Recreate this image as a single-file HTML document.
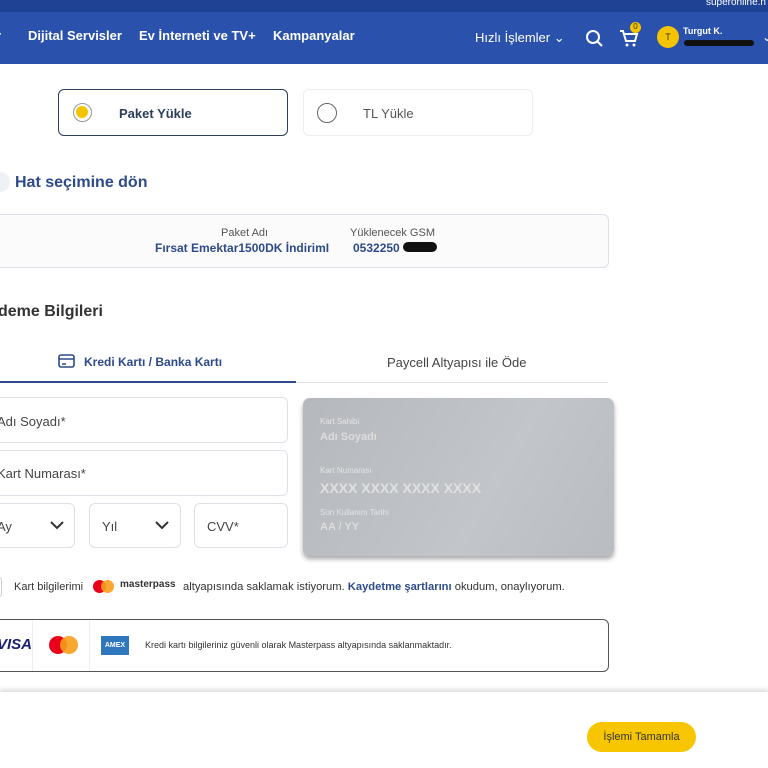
<!DOCTYPE html><html><head><meta charset="utf-8"><style>
*{margin:0;padding:0;box-sizing:border-box}
body{width:768px;height:768px;overflow:hidden;background:#fff;font-family:"Liberation Sans",sans-serif;position:relative;color:#333}
.a{position:absolute}
.box{position:absolute;border:1px solid #dde0e6;border-radius:6px;background:#fff}
.lbl{font-size:13px;color:#444}
</style></head><body>
<div class="a" style="left:0;top:0;width:768px;height:12px;background:#1f4294"></div>
<div class="a" style="right:2px;top:-3px;font-size:10px;color:#fff">superonline.n</div>
<div class="a" style="left:0;top:12px;width:768px;height:52px;background:#2a52ad"></div>
<div class="a" style="top:28px;left:0;color:#fff;font-size:13px;font-weight:bold;white-space:nowrap">
<span class="a" style="left:-4px">r</span><span class="a" style="left:28px">Dijital Servisler</span><span class="a" style="left:139px">Ev İnterneti ve TV+</span><span class="a" style="left:273px">Kampanyalar</span></div>
<div class="a" style="top:30px;left:475px;color:#fff;font-size:13px">Hızlı İşlemler ⌄</div>
<svg class="a" style="left:585px;top:29px" width="18" height="18"><circle cx="8" cy="8" r="6" fill="none" stroke="#fff" stroke-width="2"/><path d="M12 12l5 5" stroke="#fff" stroke-width="2"/></svg>
<svg class="a" style="left:619px;top:28px" width="20" height="20"><path d="M1 3h3l3 10h9l2-7H5" fill="none" stroke="#fff" stroke-width="2"/><circle cx="8" cy="17" r="1.5" fill="#fff"/><circle cx="15" cy="17" r="1.5" fill="#fff"/></svg>
<div class="a" style="left:630px;top:22px;width:11px;height:11px;border-radius:50%;background:#f5c400;font-size:8px;text-align:center;color:#333">0</div>
<div class="a" style="left:657px;top:26px;width:22px;height:22px;border-radius:50%;background:#f5c400;font-size:9px;text-align:center;line-height:22px;color:#333">T</div>
<div class="a" style="left:683px;top:26px;color:#fff;font-size:9px;font-weight:bold">Turgut K.</div>
<div class="a" style="left:684px;top:40px;width:70px;height:6px;background:#111;border-radius:3px"></div>
<div class="a" style="left:762px;top:30px;color:#fff;font-size:12px">⌄</div>

<div class="box" style="left:58px;top:89px;width:230px;height:47px;border-color:#2d3e5e"></div>
<div class="a" style="left:73px;top:103px;width:19px;height:19px;border-radius:50%;border:1.5px solid #999;background:#fff"><div style="margin:2px;width:12px;height:12px;border-radius:50%;background:#f5c400"></div></div>
<div class="a" style="left:119px;top:106px;font-size:13px;font-weight:bold;color:#2d3e5e">Paket Yükle</div>
<div class="box" style="left:303px;top:89px;width:230px;height:47px;border-color:#eee"></div>
<div class="a" style="left:317px;top:103px;width:20px;height:20px;border-radius:50%;border:1.5px solid #666"></div>
<div class="a" style="left:363px;top:106px;font-size:13px;color:#555">TL Yükle</div>

<div class="a" style="left:-10px;top:172px;width:20px;height:20px;border-radius:50%;background:#eef1f6"></div>
<div class="a" style="left:15px;top:174px;font-size:16px;font-weight:bold;color:#2d4a8a">Hat seçimine dön</div>

<div class="box" style="left:-10px;top:214px;width:619px;height:54px;background:#fbfbfc"></div>
<div class="a" style="left:221px;top:227px;font-size:11px;color:#555">Paket Adı</div>
<div class="a" style="left:155px;top:241px;font-size:12px;font-weight:bold;color:#2d4a8a">Fırsat Emektar1500DK İndirimI</div>
<div class="a" style="left:350px;top:227px;font-size:11px;color:#555">Yüklenecek GSM</div>
<div class="a" style="left:353px;top:241px;font-size:12px;font-weight:bold;color:#2d4a8a">0532250</div>
<div class="a" style="left:403px;top:242px;width:34px;height:10px;background:#111;border-radius:5px"></div>

<div class="a" style="left:-2px;top:303px;font-size:16px;font-weight:bold;color:#333">deme Bilgileri</div>
<svg class="a" style="left:58px;top:354px" width="17" height="14"><rect x="1" y="1" width="15" height="12" rx="2" fill="none" stroke="#2d4a8a" stroke-width="1.6"/><path d="M1 5h15M4 10h4" stroke="#2d4a8a" stroke-width="1.6"/></svg>
<div class="a" style="left:84px;top:355px;font-size:12px;font-weight:bold;color:#2d4a8a">Kredi Kartı / Banka Kartı</div>
<div class="a" style="left:387px;top:355px;font-size:13px;color:#444">Paycell Altyapısı ile Öde</div>
<div class="a" style="left:0;top:382px;width:608px;height:1px;background:#e3e3e3"></div>
<div class="a" style="left:0;top:381px;width:296px;height:2px;background:#2d4a8a"></div>

<div class="box" style="left:-10px;top:397px;width:298px;height:46px"></div>
<div class="a lbl" style="left:-3px;top:414px">Adı Soyadı*</div>
<div class="box" style="left:-10px;top:450px;width:298px;height:46px"></div>
<div class="a lbl" style="left:-3px;top:466px">Kart Numarası*</div>
<div class="box" style="left:-10px;top:503px;width:85px;height:45px"></div>
<div class="a lbl" style="left:-3px;top:519px">Ay</div>
<div class="box" style="left:89px;top:503px;width:92px;height:45px"></div>
<div class="a lbl" style="left:102px;top:519px">Yıl</div>
<svg class="a" style="left:50px;top:521px" width="14" height="9"><path d="M1 1l6 6 6-6" fill="none" stroke="#333" stroke-width="2"/></svg>
<svg class="a" style="left:155px;top:521px" width="14" height="9"><path d="M1 1l6 6 6-6" fill="none" stroke="#333" stroke-width="2"/></svg>
<div class="box" style="left:194px;top:503px;width:94px;height:45px"></div>
<div class="a lbl" style="left:207px;top:519px">CVV*</div>

<div class="a" style="left:303px;top:398px;width:311px;height:158px;border-radius:7px;background:linear-gradient(120deg,#b5b8bd,#c2c5c9 60%,#b9bcc1);box-shadow:0 3px 5px rgba(0,0,0,.35)"></div>
<div class="a" style="left:320px;top:417px;font-size:8px;color:#e4e4e4">Kart Sahibi</div>
<div class="a" style="left:320px;top:431px;font-size:11px;font-weight:bold;color:#dcdcdc">Adı Soyadı</div>
<div class="a" style="left:320px;top:466px;font-size:8px;color:#e4e4e4">Kart Numarası</div>
<div class="a" style="left:320px;top:480px;font-size:14px;font-weight:bold;color:#e0e0e0">XXXX XXXX XXXX XXXX</div>
<div class="a" style="left:320px;top:508px;font-size:8px;color:#e4e4e4">Son Kullanım Tarihi</div>
<div class="a" style="left:320px;top:521px;font-size:11px;font-weight:bold;color:#dcdcdc">AA / YY</div>

<div class="a" style="left:-14px;top:577px;width:16px;height:20px;border:1px solid #ccc;border-radius:3px"></div>
<div class="a" style="left:14px;top:581px;font-size:11px;color:#333;white-space:nowrap">Kart bilgilerimi</div>
<div class="a" style="left:93px;top:580px;width:13px;height:13px;border-radius:50%;background:#eb001b"></div>
<div class="a" style="left:101px;top:580px;width:13px;height:13px;border-radius:50%;background:#f79e1b;opacity:.9"></div>
<div class="a" style="left:120px;top:579px;font-size:10px;font-weight:bold;color:#333">masterpass</div>
<div class="a" style="left:183px;top:581px;font-size:11.2px;color:#333;white-space:nowrap">altyapısında saklamak istiyorum. <b style="color:#2d4a8a">Kaydetme şartlarını</b> okudum, onaylıyorum.</div>

<div class="box" style="left:-10px;top:619px;width:619px;height:53px;border-color:#555"></div>
<div class="a" style="left:-3px;top:636px;font-size:15px;font-weight:bold;font-style:italic;color:#1a1f71">VISA</div>
<div class="a" style="left:32px;top:620px;width:1px;height:51px;background:#eee"></div>
<div class="a" style="left:49px;top:636px;width:18px;height:18px;border-radius:50%;background:#eb001b"></div>
<div class="a" style="left:60px;top:636px;width:18px;height:18px;border-radius:50%;background:#f79e1b;opacity:.9"></div>
<div class="a" style="left:89px;top:620px;width:1px;height:51px;background:#eee"></div>
<div class="a" style="left:101px;top:636px;width:28px;height:19px;background:#2e77bc;color:#fff;font-size:7px;font-weight:bold;text-align:center;line-height:19px">AMEX</div>
<div class="a" style="left:145px;top:640px;font-size:9px;color:#333;white-space:nowrap">Kredi kartı bilgileriniz güvenli olarak Masterpass altyapısında saklanmaktadır.</div>

<div class="a" style="left:0;top:692px;width:768px;height:76px;background:#fff;box-shadow:0 -3px 4px rgba(0,0,0,.12)"></div>
<div class="a" style="left:587px;top:722px;width:109px;height:30px;border-radius:15px;background:#f7c600;font-size:11px;color:#333;text-align:center;line-height:30px">İşlemi Tamamla</div>
</body></html>
